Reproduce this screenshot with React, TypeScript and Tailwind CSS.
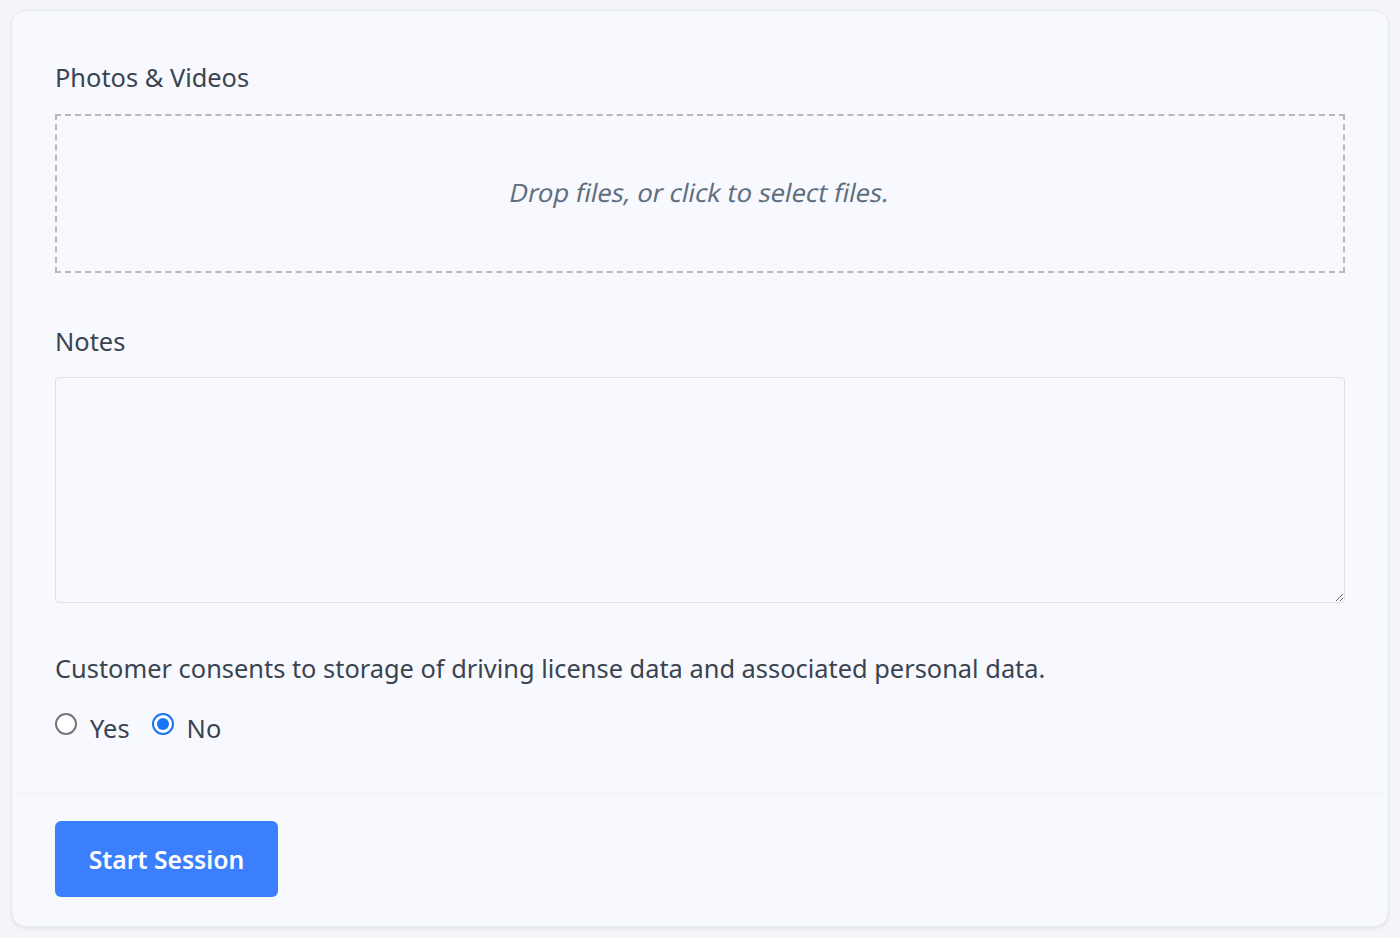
import { useState } from "react";

const font = { fontFamily: '"Noto Sans", "Open Sans", sans-serif' };

function Radio({ checked, label, onClick }: { checked: boolean; label: string; onClick: () => void }) {
  return (
    <label onClick={onClick} className="flex items-center gap-[13px] cursor-pointer">
      <span
        className={
          checked
            ? "w-[22px] h-[22px] rounded-full border-2 border-[#1a73f5] bg-white flex items-center justify-center -mt-[9px]"
            : "w-[22px] h-[22px] rounded-full border-2 border-[#767676] bg-white -mt-[9px]"
        }
      >
        {checked && <span className="w-[12px] h-[12px] rounded-full bg-[#1a73f5]" />}
      </span>
      <span className="text-[25.4px] text-[#3a4450]">{label}</span>
    </label>
  );
}

export default function App() {
  const [consent, setConsent] = useState<"yes" | "no">("no");

  return (
    <div className="min-h-[938px] bg-[#f3f5fb] px-[11px] pt-[10px] pb-[10px]" style={font}>
      <div className="bg-[#f8f9fe] border border-[#e6e8ef] rounded-[14px] shadow-[0_2px_3px_rgba(0,0,0,0.06)]">
        <div className="px-[43px] pt-[48px] pb-[46px]">
          <h2 className="text-[25.4px] leading-[36px] text-[#3a4450]">Photos &amp; Videos</h2>
          <div className="mt-[19px] h-[159px] border-2 border-dashed border-[#b8b9bc] flex items-center justify-center cursor-pointer">
            <p className="inline-block -skew-x-[12deg] text-[25.4px] text-[#5f6f80] pb-[2px]">Drop files, or click to select files.</p>
          </div>

          <h2 className="mt-[50px] text-[25.4px] leading-[36px] text-[#3a4450]">Notes</h2>
          <textarea className="mt-[18px] block w-full h-[226px] bg-[#f8f9fe] border border-[#dfe1e6] rounded-[4px] outline-none p-3 text-[20px]" />

          <p className="mt-[47px] text-[25.4px] leading-[36px] text-[#3a4450]">
            Customer consents to storage of driving license data and associated personal data.
          </p>
          <div className="mt-[23px] flex items-center gap-[22px]">
            <Radio checked={consent === "yes"} label="Yes" onClick={() => setConsent("yes")} />
            <Radio checked={consent === "no"} label="No" onClick={() => setConsent("no")} />
          </div>
        </div>
        <div className="border-t border-[#eef0f5] px-[43px] pt-[27px] pb-[29px]">
          <button className="w-[223px] h-[76px] rounded-[6px] bg-[#3b7ffe] text-white text-[24.7px] font-semibold">
            Start Session
          </button>
        </div>
      </div>
    </div>
  );
}
